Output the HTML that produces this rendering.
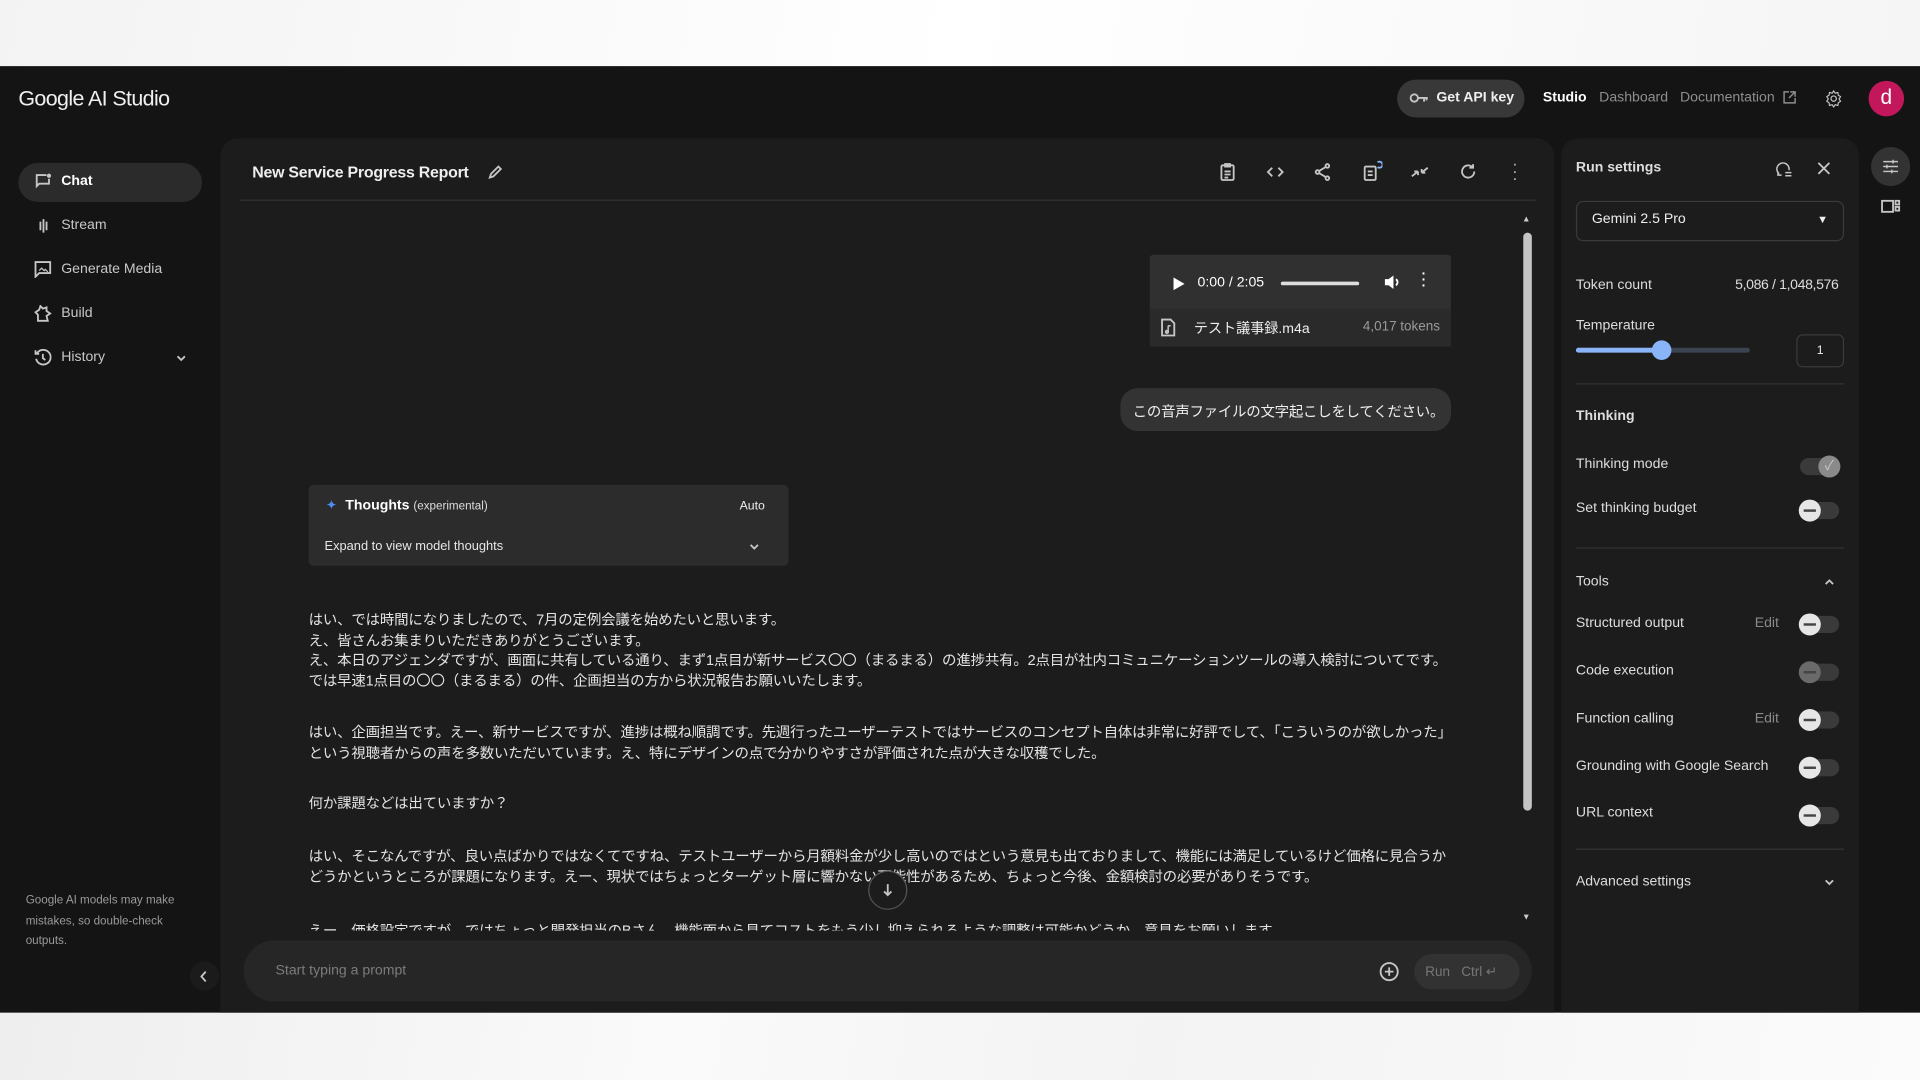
<!DOCTYPE html>
<html><head><meta charset="utf-8">
<style>
*{box-sizing:border-box;margin:0;padding:0}
html,body{width:1920px;height:1080px;overflow:hidden;background:#f6f6f6}
#s{position:absolute;left:0;top:0;width:1568px;height:882px;transform:scale(1.22449);transform-origin:0 0;font-family:"Liberation Sans","Noto Sans CJK JP",sans-serif;color:#e3e3e3}
.a{position:absolute}
.app{left:0;top:54px;width:1568px;height:773px;background:#141414}
.t{position:absolute;white-space:nowrap}
.ico{position:absolute;stroke:#c4c7c5;fill:none;stroke-width:1.5}
.tog{position:absolute;width:32px;height:14px;border-radius:7px;background:#3a3a3a}
.tog i{position:absolute;left:-1px;top:-2px;width:18px;height:18px;border-radius:50%;background:#e6e6e6}
.tog i:after{content:"";position:absolute;left:4px;top:8px;width:10px;height:1.6px;background:#444}
.jp{font-size:11.8px;line-height:16.5px;color:#e3e3e3;left:252px;width:940px;white-space:normal;letter-spacing:-0.15px}
.rl{font-size:11.5px;color:#ddd}
</style></head><body>
<div id="s">
<div class="a" style="left:0;top:0;width:1568px;height:54px;background:linear-gradient(100deg,#f3f3f3 0%,#fafafa 30%,#ffffff 50%,#f5f5f5 100%)"></div>
<div class="a" style="left:0;top:827px;width:1568px;height:55px;background:linear-gradient(100deg,#eeeeee 0%,#fafafa 35%,#f3f3f3 60%,#fbfbfb 100%)"></div>
<div class="a app"></div>

<!-- header -->
<div class="t" style="left:15px;top:70px;font-size:17.5px;color:#f0f0f0;letter-spacing:-0.5px">Google AI Studio</div>
<div class="a" style="left:1141px;top:65px;width:104px;height:31px;border-radius:16px;background:#383838"></div>
<svg class="ico" style="left:1151px;top:74px" width="16" height="12" viewBox="0 0 16 12"><circle cx="4" cy="6" r="3"/><path d="M7 6h8M12 6v3M14 6v2"/></svg>
<div class="t" style="left:1173px;top:74px;font-size:11.5px;font-weight:bold;color:#eee">Get API key</div>
<div class="t" style="left:1260px;top:74px;font-size:11.5px;font-weight:bold;color:#fff">Studio</div>
<div class="t" style="left:1306px;top:74px;font-size:11.5px;color:#8e8e8e">Dashboard</div>
<div class="t" style="left:1372px;top:74px;font-size:11.5px;color:#8e8e8e">Documentation</div>
<svg class="ico" style="left:1456px;top:74px;stroke:#8e8e8e;stroke-width:1.2" width="11" height="11" viewBox="0 0 11 11"><path d="M5 1H1v9h9V6M6 1h4v4M10 1L5 6"/></svg>
<svg class="ico" style="left:1490px;top:73px" width="15" height="15" viewBox="0 0 24 24"><circle cx="12" cy="12" r="3.5"/><path d="M12 2l2 3 3.5-1 .5 3.5 3 2-2 3 2 3-3 2-.5 3.5-3.5-1-2 3-2-3-3.5 1-.5-3.5-3-2 2-3-2-3 3-2 .5-3.5 3.5 1z"/></svg>
<div class="a" style="left:1526px;top:66px;width:29px;height:29px;border-radius:50%;background:#c2185b;color:#fff;font-size:17px;text-align:center;line-height:27px">d</div>

<!-- sidebar -->
<div class="a" style="left:15px;top:133px;width:150px;height:32px;border-radius:16px;background:#2b2b2b"></div>
<svg class="ico" style="left:28px;top:141px" width="15" height="15" viewBox="0 0 15 15"><path d="M10 2H2v9l2-2h8V5"/><circle cx="12" cy="2.5" r="1" fill="#c4c7c5"/></svg>
<div class="t" style="left:50px;top:142px;font-size:11.5px;font-weight:bold;color:#fff">Chat</div>
<svg class="ico" style="left:29px;top:178px" width="13" height="13" viewBox="0 0 13 13"><path d="M1 6.5v0M4 3v7M6.5 1v11M9 3v7M12 6.5v0"/></svg>
<div class="t" style="left:50px;top:178px;font-size:11.5px;color:#c8c8c8">Stream</div>
<svg class="ico" style="left:28px;top:213px" width="14" height="14" viewBox="0 0 14 14"><path d="M1 1h12v9H4l-3 3z"/><path d="M4 8l2-2 2 2 1-1 2 2" stroke-width="1"/></svg>
<div class="t" style="left:50px;top:214px;font-size:11.5px;color:#c8c8c8">Generate Media</div>
<svg class="ico" style="left:28px;top:249px" width="14" height="14" viewBox="0 0 14 14"><path d="M3 13V8L1 6l3-2 1-3 2 2 3-1v3l3 2-3 2 1 4z"/></svg>
<div class="t" style="left:50px;top:250px;font-size:11.5px;color:#c8c8c8">Build</div>
<svg class="ico" style="left:28px;top:285px" width="14" height="14" viewBox="0 0 14 14"><path d="M2 4A6 6 0 1 1 1.5 8M1 1v3h3M7 4v3.5l2 1.5"/></svg>
<div class="t" style="left:50px;top:286px;font-size:11.5px;color:#c8c8c8">History</div>
<svg class="ico" style="left:143px;top:289px" width="10" height="7" viewBox="0 0 10 7"><path d="M2 2l3 3 3-3"/></svg>
<div class="t" style="left:21px;top:728px;font-size:9.5px;line-height:16.5px;color:#9a9a9a;white-space:normal;width:130px">Google AI models may make mistakes, so double-check outputs.</div>
<div class="a" style="left:155px;top:785px;width:24px;height:24px;border-radius:50%;background:#1b1b1b"></div>
<svg class="ico" style="left:162px;top:792px" width="9" height="11" viewBox="0 0 9 11"><path d="M6 1.5L2.5 5.5 6 9.5"/></svg>

<!-- main panel -->
<div class="a" style="left:180px;top:113px;width:1089px;height:714px;border-radius:14px 14px 0 0;background:#1c1c1c"></div>
<div class="t" style="left:206px;top:133px;font-size:13px;font-weight:bold;color:#eee;letter-spacing:-0.2px">New Service Progress Report</div>
<svg class="ico" style="left:398px;top:134px" width="13" height="13" viewBox="0 0 13 13"><path d="M2 11l1-3 6-6 2 2-6 6z"/></svg>
<div class="a" style="left:196px;top:163px;width:1058px;height:1px;background:#333"></div>
<svg class="ico" style="left:996px;top:133px" width="13" height="15" viewBox="0 0 13 15"><rect x="1.5" y="2" width="10" height="12" rx="1"/><path d="M4.5 1h4v2h-4zM4 7h5M4 9.5h5M4 12h3"/></svg>
<svg class="ico" style="left:1034px;top:135px" width="15" height="11" viewBox="0 0 15 11"><path d="M5 2L1.5 5.5 5 9M10 2l3.5 3.5L10 9"/></svg>
<svg class="ico" style="left:1073px;top:133px" width="14" height="15" viewBox="0 0 14 15"><circle cx="11" cy="2.5" r="1.5"/><circle cx="3" cy="7.5" r="1.5"/><circle cx="11" cy="12.5" r="1.5"/><path d="M4.5 6.5l5-3M4.5 8.5l5 3"/></svg>
<svg class="ico" style="left:1113px;top:131px" width="16" height="17" viewBox="0 0 16 17"><rect x="1.5" y="5" width="9" height="11" rx="1"/><path d="M4 9h4M4 12h4"/><path d="M12 1.5a2.5 2.5 0 1 1 0 4" stroke="#8ab4f8"/></svg>
<svg class="ico" style="left:1152px;top:133px" width="15" height="15" viewBox="0 0 15 15"><path d="M1 11l5-4M6 7v3M6 7H3M14 4l-5 4M9 8V5M9 8h3"/></svg>
<svg class="ico" style="left:1192px;top:133px" width="14" height="14" viewBox="0 0 14 14"><path d="M12 7A5 5 0 1 1 10.5 3.5M11 1v3H8"/></svg>
<div class="t" style="left:1235px;top:131px;font-size:13px;color:#c4c7c5;line-height:6px;width:4px;text-align:center">·<br>·<br>·</div>

<!-- scrollbar -->
<div class="t" style="left:1243px;top:176px;font-size:7px;color:#ccc">▲</div>
<div class="a" style="left:1244px;top:190px;width:7px;height:472px;border-radius:4px;background:#c4c4c4"></div>
<div class="t" style="left:1243px;top:746px;font-size:7px;color:#ccc">▼</div>

<!-- audio card -->
<div class="a" style="left:939px;top:208px;width:246px;height:75px;background:#303030;border-radius:3px"></div>
<div class="a" style="left:939px;top:252px;width:246px;height:31px;background:#2a2a2a"></div>
<div class="t" style="left:957px;top:224px;font-size:11px;color:#fff">▶</div>
<div class="t" style="left:978px;top:225px;font-size:11.5px;color:#fff">0:00 / 2:05</div>
<div class="a" style="left:1046px;top:230px;width:64px;height:3px;background:#ddd;border-radius:2px"></div>
<svg class="a" style="left:1130px;top:224px" width="14" height="13" viewBox="0 0 14 13"><path d="M1 4h3l4-3v11L4 9H1z" fill="#fff"/><path d="M10 4a3 3 0 0 1 0 5" stroke="#fff" fill="none" stroke-width="1.5"/></svg>
<div class="t" style="left:1161px;top:222px;font-size:11px;color:#fff;line-height:5px;font-weight:bold">·<br>·<br>·</div>
<svg class="ico" style="left:948px;top:260px" width="12" height="15" viewBox="0 0 12 15"><path d="M1 1h7l3 3v10H1z"/><path d="M6 6v5M6 6h2" stroke-width="1.2"/><circle cx="5" cy="11" r="1"/></svg>
<div class="t" style="left:975px;top:260px;font-size:11.5px;color:#eee">テスト議事録.m4a</div>
<div class="t" style="left:1113px;top:261px;font-size:11px;color:#9a9a9a">4,017 tokens</div>

<!-- user bubble -->
<div class="a" style="left:915px;top:317px;width:270px;height:35px;border-radius:14px;background:#333"></div>
<div class="t" style="left:925px;top:327px;font-size:11.8px;letter-spacing:-0.2px;color:#eee">この音声ファイルの文字起こしをしてください。</div>

<!-- thoughts -->
<div class="a" style="left:252px;top:396px;width:392px;height:66px;border-radius:4px;background:#2c2c2c"></div>
<div class="t" style="left:266px;top:406px;font-size:11px;color:#4c8df6">✦</div>
<div class="t" style="left:282px;top:407px;font-size:11.5px;font-weight:bold;color:#fff">Thoughts <span style="font-size:9.5px;font-weight:normal;color:#ddd">(experimental)</span></div>
<div class="t" style="left:604px;top:408px;font-size:10px;color:#eee">Auto</div>
<div class="t" style="left:265px;top:440px;font-size:10.5px;color:#e6e6e6">Expand to view model thoughts</div>
<svg class="ico" style="left:611px;top:443px" width="10" height="7" viewBox="0 0 10 7"><path d="M2 2l3 3 3-3"/></svg>

<!-- transcript -->
<div class="t jp" style="top:498px">はい、では時間になりましたので、7月の定例会議を始めたいと思います。<br>え、皆さんお集まりいただきありがとうございます。<br>え、本日のアジェンダですが、画面に共有している通り、まず1点目が新サービス〇〇（まるまる）の進捗共有。2点目が社内コミュニケーションツールの導入検討についてです。では早速1点目の〇〇（まるまる）の件、企画担当の方から状況報告お願いいたします。</div>
<div class="t jp" style="top:590px">はい、企画担当です。えー、新サービスですが、進捗は概ね順調です。先週行ったユーザーテストではサービスのコンセプト自体は非常に好評でして、「こういうのが欲しかった」という視聴者からの声を多数いただいています。え、特にデザインの点で分かりやすさが評価された点が大きな収穫でした。</div>
<div class="t jp" style="top:648px">何か課題などは出ていますか？</div>
<div class="t jp" style="top:691px">はい、そこなんですが、良い点ばかりではなくてですね、テストユーザーから月額料金が少し高いのではという意見も出ておりまして、機能には満足しているけど価格に見合うかどうかというところが課題になります。えー、現状ではちょっとターゲット層に響かない可能性があるため、ちょっと今後、金額検討の必要がありそうです。</div>
<div class="a" style="left:252px;top:751px;width:935px;height:9px;overflow:hidden"><div class="t" style="top:0;font-size:11.8px;letter-spacing:-0.15px;color:#e3e3e3">えー、価格設定ですが、ではちょっと開発担当のBさん、機能面から見てコストをもう少し抑えられるような調整は可能かどうか、意見をお願いします。</div></div>
<div class="a" style="left:709px;top:711px;width:32px;height:32px;border-radius:50%;background:#1c1c1c;border:1px solid #555"></div>
<svg class="ico" style="left:720px;top:721px" width="10" height="12" viewBox="0 0 10 12"><path d="M5 1v9M2 7l3 3 3-3"/></svg>

<!-- prompt -->
<div class="a" style="left:199px;top:768px;width:1052px;height:50px;border-radius:25px;background:#262626"></div>
<div class="t" style="left:225px;top:787px;font-size:11.5px;color:#7c7c7c">Start typing a prompt</div>
<svg class="ico" style="left:1126px;top:785px" width="17" height="17" viewBox="0 0 17 17"><circle cx="8.5" cy="8.5" r="7"/><path d="M8.5 5v7M5 8.5h7"/></svg>
<div class="a" style="left:1155px;top:779px;width:86px;height:29px;border-radius:15px;background:#323232"></div>
<div class="t" style="left:1164px;top:787px;font-size:11px;color:#777">Run&nbsp;&nbsp; Ctrl ↵</div>

<!-- right panel -->
<div class="a" style="left:1275px;top:113px;width:243px;height:714px;border-radius:14px 14px 0 0;background:#1c1c1c"></div>
<div class="t" style="left:1287px;top:131px;font-size:11.5px;font-weight:bold;color:#ddd">Run settings</div>
<svg class="ico" style="left:1450px;top:131px" width="14" height="14" viewBox="0 0 14 14"><path d="M3 11A5 5 0 1 1 11 8M2 9v3h3M8 10h5M8 12.5h5" stroke-width="1.2"/></svg>
<svg class="ico" style="left:1484px;top:132px" width="11" height="11" viewBox="0 0 11 11"><path d="M1 1l9 9M10 1l-9 9"/></svg>
<div class="a" style="left:1287px;top:164px;width:219px;height:33px;border-radius:6px;border:1px solid #3a3a3a"></div>
<div class="t" style="left:1300px;top:173px;font-size:11.5px;color:#eee">Gemini 2.5 Pro</div>
<div class="t" style="left:1484px;top:174px;font-size:9px;color:#eee">▼</div>
<div class="t rl" style="left:1287px;top:227px">Token count</div>
<div class="t rl" style="left:1417px;top:227px;letter-spacing:-0.3px">5,086 / 1,048,576</div>
<div class="t rl" style="left:1287px;top:260px">Temperature</div>
<div class="a" style="left:1287px;top:284px;width:142px;height:4px;border-radius:2px;background:#3c4350"></div>
<div class="a" style="left:1287px;top:284px;width:70px;height:4px;border-radius:2px;background:#8ab4f8"></div>
<div class="a" style="left:1349px;top:278px;width:16px;height:16px;border-radius:50%;background:#8ab4f8"></div>
<div class="a" style="left:1467px;top:273px;width:39px;height:27px;border-radius:5px;border:1px solid #3a3a3a;font-size:10px;color:#eee;text-align:center;line-height:25px">1</div>
<div class="a" style="left:1287px;top:313px;width:219px;height:1px;background:#333"></div>
<div class="t rl" style="left:1287px;top:334px;font-weight:bold">Thinking</div>
<div class="t rl" style="left:1287px;top:373px">Thinking mode</div>
<div class="a" style="left:1470px;top:374px;width:32px;height:14px;border-radius:7px;background:#3a3a3a"></div>
<div class="a" style="left:1485px;top:372px;width:18px;height:18px;border-radius:50%;background:#8a8a8a;color:#ccc;font-size:11px;text-align:center;line-height:18px">✓</div>
<div class="t rl" style="left:1287px;top:409px">Set thinking budget</div>
<div class="tog" style="left:1470px;top:410px"><i></i></div>
<div class="a" style="left:1287px;top:447px;width:219px;height:1px;background:#333"></div>
<div class="t rl" style="left:1287px;top:469px">Tools</div>
<svg class="ico" style="left:1489px;top:472px" width="10" height="7" viewBox="0 0 10 7"><path d="M2 5l3-3 3 3"/></svg>
<div class="t rl" style="left:1287px;top:503px">Structured output</div>
<div class="t rl" style="left:1433px;top:503px;color:#8a8a8a">Edit</div>
<div class="tog" style="left:1470px;top:503px"><i></i></div>
<div class="t rl" style="left:1287px;top:542px">Code execution</div>
<div class="tog" style="left:1470px;top:542px"><i style="background:#6a6a6a"></i></div>
<div class="t rl" style="left:1287px;top:581px">Function calling</div>
<div class="t rl" style="left:1433px;top:581px;color:#8a8a8a">Edit</div>
<div class="tog" style="left:1470px;top:581px"><i></i></div>
<div class="t rl" style="left:1287px;top:620px">Grounding with Google Search</div>
<div class="tog" style="left:1470px;top:620px"><i></i></div>
<div class="t rl" style="left:1287px;top:658px">URL context</div>
<div class="tog" style="left:1470px;top:659px"><i></i></div>
<div class="a" style="left:1287px;top:693px;width:219px;height:1px;background:#333"></div>
<div class="t rl" style="left:1287px;top:714px">Advanced settings</div>
<svg class="ico" style="left:1489px;top:717px" width="10" height="7" viewBox="0 0 10 7"><path d="M2 2l3 3 3-3"/></svg>

<!-- far right -->
<div class="a" style="left:1528px;top:120px;width:32px;height:32px;border-radius:50%;background:#333"></div>
<svg class="ico" style="left:1537px;top:129px" width="14" height="14" viewBox="0 0 14 14"><path d="M1 3h12M1 7h12M1 11h12M9 1.5v3M4 5.5v3M8 9.5v3" stroke-width="1.2"/></svg>
<svg class="ico" style="left:1536px;top:162px" width="16" height="13" viewBox="0 0 16 13"><rect x="1" y="2" width="9" height="9"/><rect x="12" y="2" width="3" height="3"/><rect x="12" y="7" width="3" height="3"/></svg>
</div>
</body></html>
